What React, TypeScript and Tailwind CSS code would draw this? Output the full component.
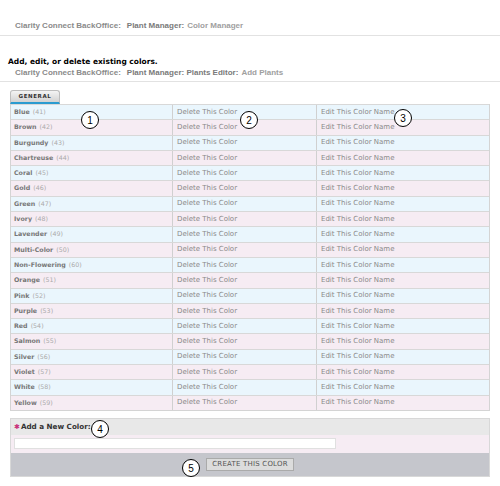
import React from "react";

const colors: [string, number][] = [
  ["Blue", 41], ["Brown", 42], ["Burgundy", 43], ["Chartreuse", 44], ["Coral", 45],
  ["Gold", 46], ["Green", 47], ["Ivory", 48], ["Lavender", 49], ["Multi-Color", 50],
  ["Non-Flowering", 60], ["Orange", 51], ["Pink", 52], ["Purple", 53], ["Red", 54],
  ["Salmon", 55], ["Silver", 56], ["Violet", 57], ["White", 58], ["Yellow", 59],
];

function Num({ n, className }: { n: number; className: string }) {
  return (
    <div
      className={`absolute w-[18px] h-[18px] rounded-full border-[1.5px] border-black bg-white flex items-center justify-center text-[10px] font-medium text-black ${className}`}
      style={{ fontFamily: "'Liberation Sans', Arial, sans-serif" }}
    >
      {n}
    </div>
  );
}

function Crumb({ second, third, h, pb }: { second: string; third: string; h: string; pb: string }) {
  return (
    <div className={`${h} ${pb} border-b border-[#e2e2e2] flex items-end pl-[15px]`} style={{ fontFamily: "'Liberation Sans', Arial, sans-serif" }}>
      <span className="text-[8px] leading-none text-[#8a8a8a] font-bold">Clarity Connect BackOffice:</span>
      <span className="text-[8px] leading-none text-[#7a7a7a] font-bold ml-[6px]">{second}</span>
      <span className="text-[8px] leading-none text-[#a0a0a0] font-bold ml-[3px]">{third}</span>
    </div>
  );
}

export default function App() {
  const vf = { fontFamily: "'DejaVu Sans', Verdana, sans-serif" };
  return (
    <div className="relative w-[500px] h-[486px] bg-white overflow-hidden">
      <div className="pt-[14px]">
        <Crumb second="Plant Manager:" third="Color Manager" h="h-[22px]" pb="pb-[5px]" />
      </div>
      <div className="h-[30px] flex items-end pb-[1px] pl-[8px] text-[7.5px] leading-none font-bold text-black" style={vf}>
        Add, edit, or delete existing colors.
      </div>
      <Crumb second="Plant Manager: Plants Editor:" third="Add Plants" h="h-[16px]" pb="pb-[4px]" />

      <div className="pl-[10px] pt-[8px]">
        <div className="w-[50px] h-[14px] border border-[#bdbdbd] border-b-[2px] border-b-[#2a9bd0] rounded-t-[3px] bg-gradient-to-b from-[#f4f4f4] to-[#d2d2d2] flex items-center justify-center text-[5.5px] font-bold tracking-[0.6px] text-[#333]" style={vf}>
          GENERAL
        </div>
      </div>

      <div className="mx-[10px] w-[480px] border border-[#d4d4d4] border-t-0" style={vf}>
        {colors.map(([name, n], i) => (
          <div
            key={name}
            className={`flex h-[15.3px] border-t border-[#d8d8d8] leading-none ${i % 2 === 0 ? "bg-[#eaf6fd]" : "bg-[#f6ecf3]"}`}
          >
            <div className="w-[162px] flex items-center pl-[3px] border-r border-[#d0d0d0] text-[6.3px]">
              <span className="font-bold text-[#777777]">{name}</span>
              <span className="text-[#aaaaaa] ml-[3px]">({n})</span>
            </div>
            <div className="w-[144px] flex items-center pl-[4px] border-r border-[#d0d0d0] text-[7px] text-[#8a8a8a]">Delete This Color</div>
            <div className="flex-1 flex items-center pl-[4px] text-[7px] text-[#8a8a8a]">Edit This Color Name</div>
          </div>
        ))}
      </div>

      <div className="mx-[10px] mt-[7px] w-[480px] border border-[#d8d8d8]" style={vf}>
        <div className="h-[16px] bg-[#e8e8e8] flex items-center pl-[3px] text-[7.2px] font-bold text-[#333]">
          <span className="text-[#c8307a] mr-[1px] text-[7px]">✱</span>Add a New Color:
        </div>
        <div className="h-[18px] bg-[#f6ecf3] flex items-center pl-[3px]">
          <div className="w-[322px] h-[11px] bg-white border border-[#e0e0e0]" />
        </div>
        <div className="h-[23px] bg-[#c5c6cc] flex items-center justify-center">
          <div className="h-[13px] px-[5px] bg-[#dcdcdc] border border-[#aaaaaa] flex items-center text-[7px] text-[#555] tracking-[0.2px]">
            CREATE THIS COLOR
          </div>
        </div>
      </div>

      <Num n={1} className="left-[81px] top-[111px]" />
      <Num n={2} className="left-[240px] top-[111px]" />
      <Num n={3} className="left-[394px] top-[109px]" />
      <Num n={4} className="left-[91px] top-[420px]" />
      <Num n={5} className="left-[182px] top-[459px]" />
    </div>
  );
}
